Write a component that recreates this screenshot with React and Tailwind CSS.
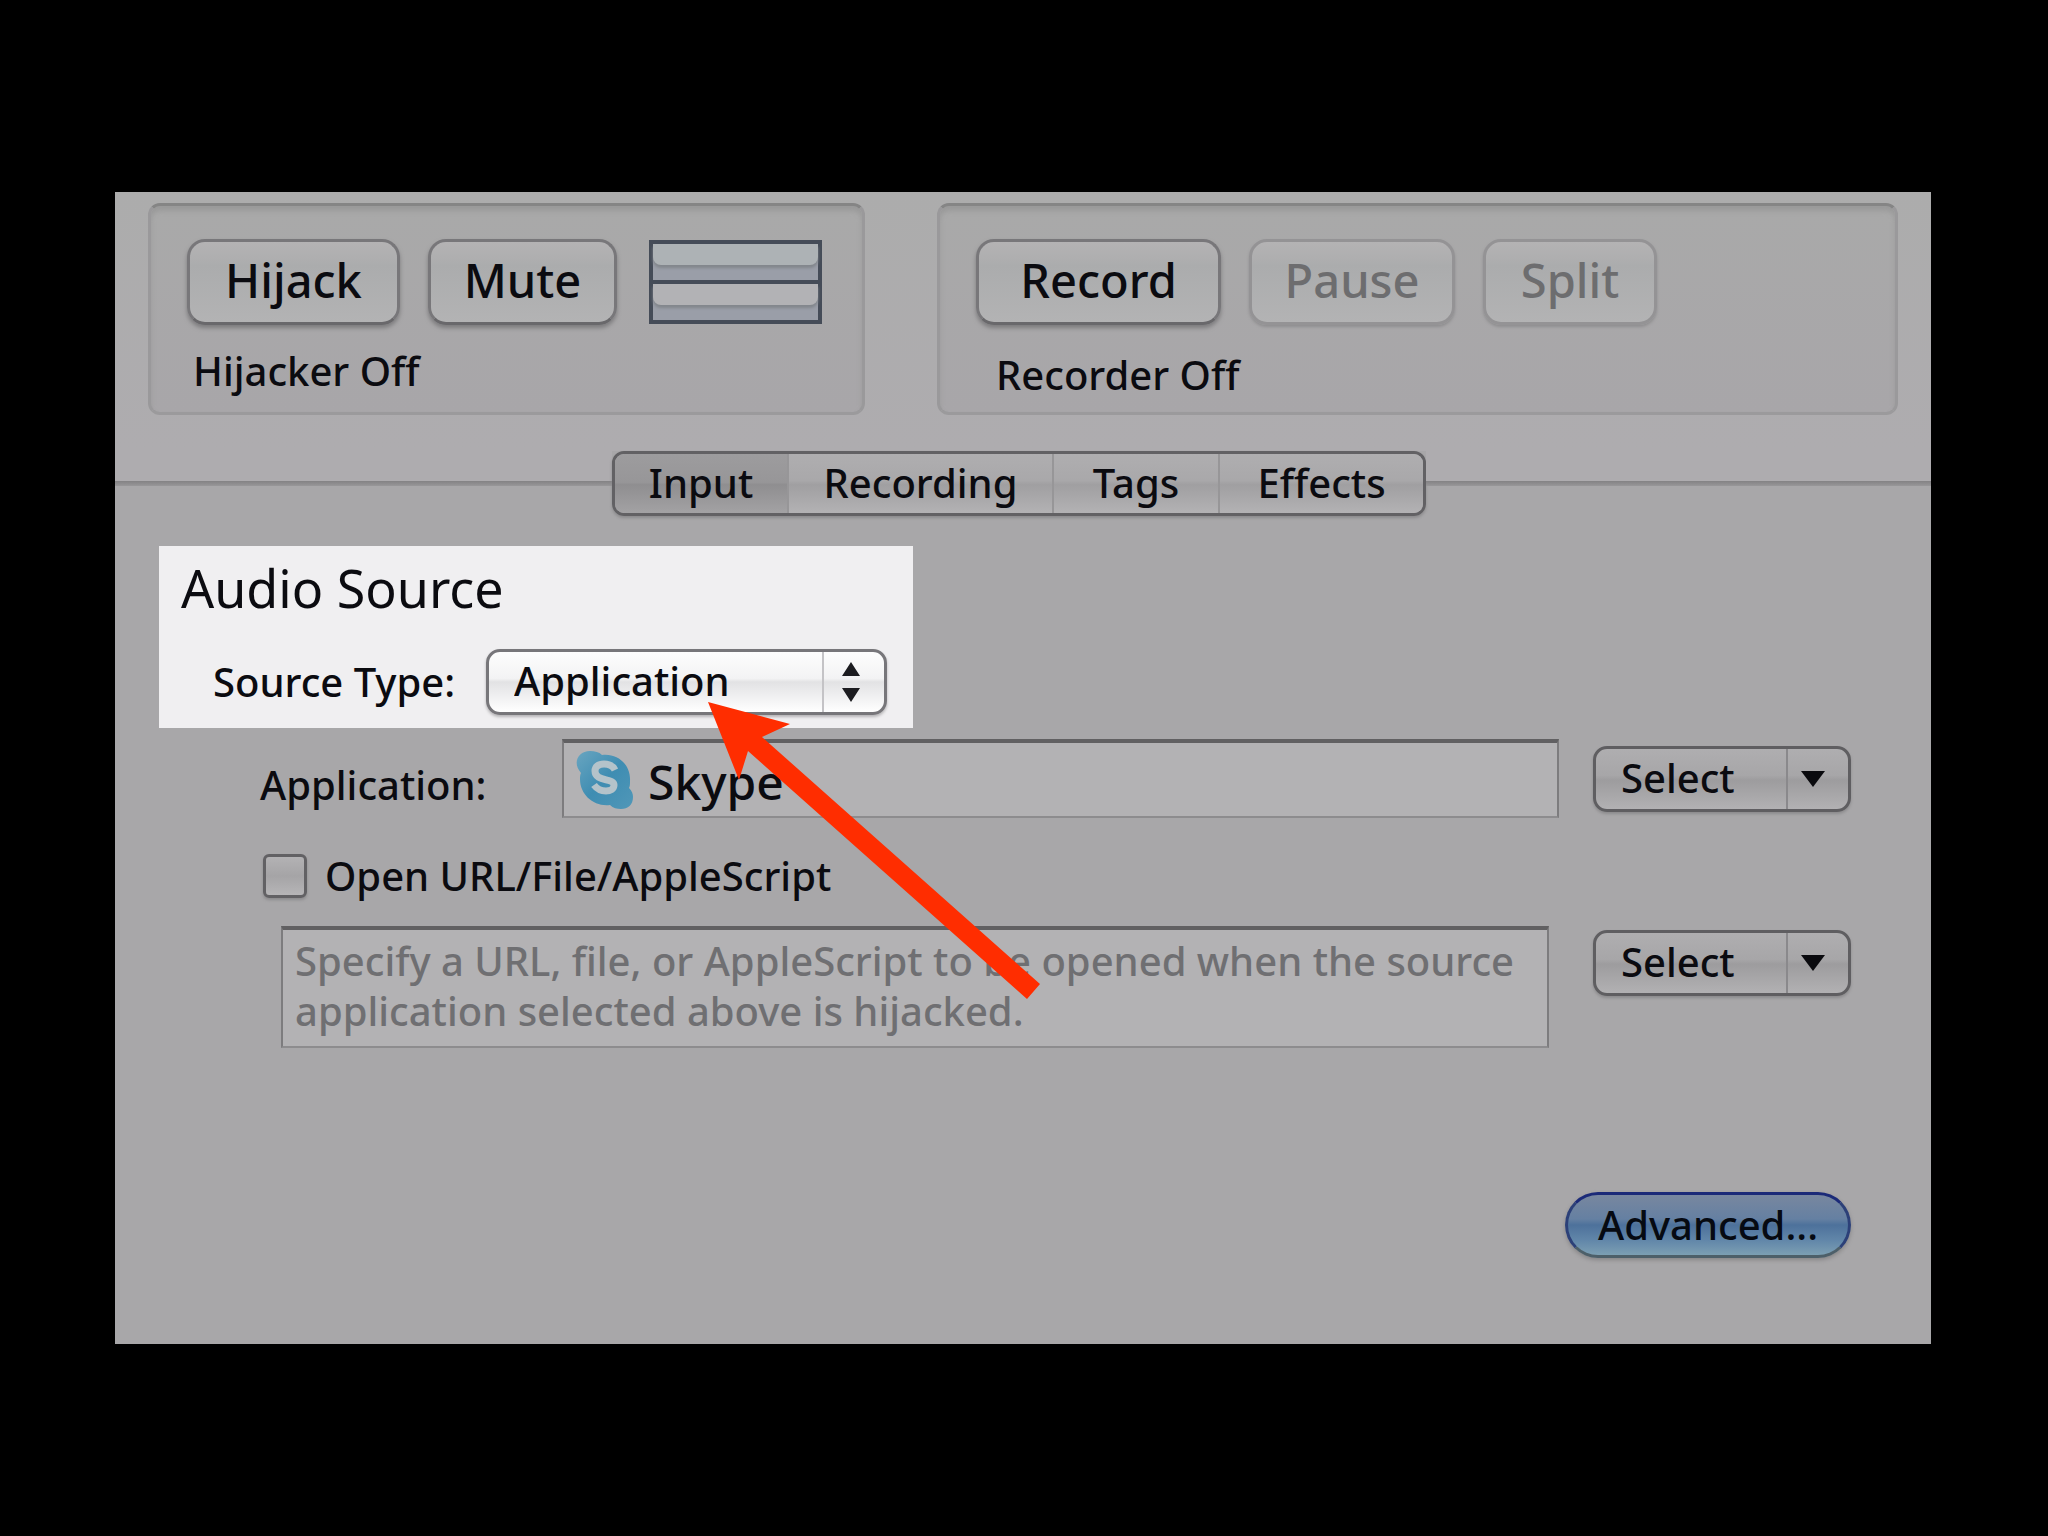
import { useState } from 'react';

const TABS = ['Input', 'Recording', 'Tags', 'Effects'];

export default function App() {
  const [tab, setTab] = useState('Input');

  return (
    <main className="relative min-h-screen bg-black pt-[192px] pb-[192px] pl-[115px] pr-[117px] font-['Noto_Sans','Lucida_Grande',sans-serif] text-[40px] font-medium leading-[48px] text-[#0b0b10]">
      <div className="bg-[#a8a7a9]">
        {/* Hijack and record groups */}
        <header className="grid grid-cols-[717fr_961fr] gap-[72px] bg-gradient-to-b from-[#acacac] to-[#aeacaf] pt-[11px] pb-9 pl-[33px] pr-[33px]">
          <Group>
            <div className="flex items-center gap-7">
              <PushButton className="w-[213px]">Hijack</PushButton>
              <PushButton className="w-[189px]">Mute</PushButton>
              <LevelMeter />
            </div>
            <p className="mt-[22px] pl-[6px]">Hijacker Off</p>
          </Group>
          <Group>
            <div className="flex items-center gap-7">
              <PushButton className="w-[245px]">Record</PushButton>
              <PushButton className="w-[206px]" disabled>Pause</PushButton>
              <PushButton className="w-[174px]" disabled>Split</PushButton>
            </div>
            <p className="mt-[26px] pl-5">Recorder Off</p>
          </Group>
        </header>

        {/* Tab bar */}
        <nav className="flex">
          <TabRule className="w-[497px]" />
          <div
            role="tablist"
            className="flex h-[65px] shrink-0 overflow-hidden rounded-[12px] border-[3px] border-[#626164] shadow-[0_2px_3px_#8c8b8d]"
          >
            {TABS.map((name) => (
              <Tab key={name} name={name} active={name === tab} onSelect={() => setTab(name)} />
            ))}
          </div>
          <TabRule className="flex-1" />
        </nav>

        {/* Audio source */}
        <section className="ml-11 mt-[30px] h-[182px] w-[754px] bg-[#f0eff1] pt-3 pl-[22px]">
          <h1 className="text-[52px] font-normal leading-[60px]">Audio Source</h1>
          <div className="mt-[31px] flex items-center pl-8">
            <label htmlFor="source-type" className="w-[273px]">Source Type:</label>
            <PopUp id="source-type" className="w-[401px]" value="Application" light />
          </div>
        </section>

        <section className="pl-[145px] pr-20 pb-[86px]">
          <div className="mt-[11px] flex items-center">
            <label htmlFor="application" className="w-[302px] pt-3">Application:</label>
            <div className="flex h-[79px] flex-1 items-center border-x-2 border-t-4 border-b-2 border-x-[#7d7c7e] border-t-[#616062] border-b-[#8d8c8e] bg-[#b3b2b4] pl-3">
              <SkypeIcon />
              <input
                id="application"
                defaultValue="Skype"
                className="ml-[14px] w-0 flex-1 bg-transparent pt-1 text-[48px] leading-[60px] outline-none"
              />
            </div>
            <PopUp id="pick-application" label="Select application" className="ml-[34px] w-[258px]" value="Select" />
          </div>

          <div className="mt-9 flex items-center gap-[18px] pl-[3px]">
            <input
              id="open-url"
              type="checkbox"
              className="size-[44px] appearance-none rounded-[6px] border-[3px] border-[#626164] bg-gradient-to-b from-[#b3b2b4] via-[#a5a4a6] to-[#b6b5b7] shadow-[0_2px_3px_#8c8b8d]"
            />
            <label htmlFor="open-url" className="-my-1">Open URL/File/AppleScript</label>
          </div>

          <div className="mt-7 flex items-start pl-[21px]">
            <textarea
              aria-label="URL, file, or AppleScript"
              disabled
              defaultValue="Specify a URL, file, or AppleScript to be opened when the source application selected above is hijacked."
              className="h-[122px] w-0 flex-1 resize-none overflow-hidden border-x-2 border-t-4 border-b-2 border-x-[#7d7c7e] border-t-[#616062] border-b-[#8d8c8e] bg-[#b3b2b4] px-3 pt-[6px] leading-[50px] text-[#6f6f72]"
            />
            <PopUp id="pick-file" label="Select file" className="ml-[44px] mt-1 w-[258px]" value="Select" />
          </div>

          <div className="mt-[144px] flex justify-end">
            <button className="h-[66px] w-[286px] rounded-full border-[3px] border-x-[#2c4078] border-t-[#1b2a78] border-b-[#4d5f69] bg-[linear-gradient(#78879f_0%,#6580a2_40%,#4d719b_50%,#6186a9_75%,#7c9fb3_100%)] text-[#060a12] shadow-[0_2px_4px_#868587]">
              Advanced...
            </button>
          </div>
        </section>
      </div>
      <PointerArrow />
    </main>
  );
}

function Group({ children }) {
  return (
    <div className="h-[212px] rounded-[12px] border-[3px] border-x-[#9a999b] border-t-[#858585] border-b-[#9b9a9c] bg-gradient-to-b from-[#a9a9a9] to-[#a8a6a9] pt-[33px] pl-9 shadow-[inset_0_5px_5px_#9a9a9a]">
      {children}
    </div>
  );
}

function PushButton({ className, disabled, children }) {
  return (
    <button
      disabled={disabled}
      className={`h-[86px] shrink-0 rounded-[18px] border-[3px] bg-[linear-gradient(#b4b3b4_0%,#aeaeaf_22%,#abacad_30%,#b3b3b4_100%)] pb-1 text-[47px] leading-[60px] ${
        disabled
          ? 'border-[#949395] text-[#6d6d6f] shadow-[0_2px_3px_#8f8e90]'
          : 'border-[#78777a] border-b-[#69686b] shadow-[0_3px_4px_#7c7b7d]'
      } ${className}`}
    >
      {children}
    </button>
  );
}

function LevelMeter() {
  return (
    <div className="ml-1 flex h-[84px] w-[173px] flex-col border-4 border-[#454c58] bg-[#9a9ea8]">
      <div className="flex-1 border-b-4 border-[#454c58]">
        <div className="h-[21px] rounded-b-[8px] bg-[#adb2b5] shadow-[0_3px_3px_#82868c]" />
      </div>
      <div className="flex-1">
        <div className="h-[21px] rounded-b-[8px] bg-[#b2b2b5] shadow-[0_3px_3px_#82868c]" />
      </div>
    </div>
  );
}

function TabRule({ className }) {
  return (
    <div className={`flex flex-col ${className}`}>
      <div className="h-[30px] bg-[#aeacaf]" />
      <div className="h-[5px] bg-gradient-to-b from-[#838284] to-[#989799]" />
    </div>
  );
}

function Tab({ name, active, onSelect }) {
  const widths = { Input: 'w-[174px]', Recording: 'w-[265px]', Tags: 'w-[166px]', Effects: 'w-[203px]' };
  return (
    <button
      role="tab"
      aria-selected={active}
      onClick={onSelect}
      className={`border-r-2 border-[#979698] pb-[2px] last:border-r-0 ${widths[name]} ${
        active
          ? 'bg-[linear-gradient(#9d9c9e_0%,#979698_48%,#8f8e90_52%,#a3a2a4_100%)]'
          : 'bg-[linear-gradient(#afaeb0_0%,#a9a8aa_45%,#a09fa1_52%,#b3b2b4_100%)]'
      }`}
    >
      {name}
    </button>
  );
}

function PopUp({ id, label, className, value, light }) {
  return (
    <div className={`relative shrink-0 ${className}`}>
      <select
        id={id}
        aria-label={label}
        className={`block h-[66px] w-full appearance-none rounded-[14px] border-[3px] pb-[2px] pl-[25px] ${
          light
            ? 'border-[#77767a] bg-[linear-gradient(#fdfdfd_0%,#f3f3f4_44%,#e2e2e4_50%,#ffffff_100%)] shadow-[0_2px_3px_#b5b4b6]'
            : 'border-[#5f5e61] bg-[linear-gradient(#afaeb0_0%,#a7a6a8_44%,#9d9c9e_52%,#b2b1b3_100%)] shadow-[0_2px_3px_#8c8b8d]'
        }`}
      >
        <option>{value}</option>
      </select>
      <span
        className={`pointer-events-none absolute inset-y-[3px] right-[3px] flex w-[62px] items-center justify-center border-l-2 ${
          light ? 'border-[#c4c3c6] pr-[6px]' : 'border-[#8a898c] pr-[10px]'
        }`}
      >
        {light ? (
          <svg width="18" height="40" viewBox="0 0 18 40" fill="#1c1c20">
            <path d="M9 0l9 14H0zM0 26h18L9 40z" />
          </svg>
        ) : (
          <svg width="24" height="16" viewBox="0 0 24 16" fill="#0a0a0e">
            <path d="M0 0h24L12 16z" />
          </svg>
        )}
      </span>
    </div>
  );
}

function SkypeIcon() {
  return (
    <svg width="58" height="58" viewBox="0 0 58 58" className="shrink-0" aria-hidden="true">
      <defs>
        <linearGradient id="skype" x1="0" y1="0" x2="1" y2="1">
          <stop offset="0" stopColor="#69a5c0" />
          <stop offset="0.5" stopColor="#3f8db2" />
          <stop offset="1" stopColor="#5097b8" />
        </linearGradient>
      </defs>
      <path
        d="M14 0c5 0 9 1 12 4 16-2 29 10 28 26 0 3 0 5-1 7 3 3 4 6 4 9 0 8-5 12-12 12-4 0-8-1-11-4C18 56 4 44 4 28c0-2 0-4 1-6C-4 12 2 0 14 0z"
        fill="url(#skype)"
      />
      <path
        d="M39 19c-2-4-6-6-11-6-6 0-9 3-9 7 0 11 19 7 19 14 0 4-4 6-8 6-5 0-9-2-12-6"
        fill="none"
        stroke="#b4c3ca"
        strokeWidth="7"
      />
    </svg>
  );
}

// callout arrow laid over the form
function PointerArrow() {
  return (
    <svg
      className="pointer-events-none absolute left-[708px] top-[702px]"
      width="334"
      height="298"
      viewBox="0 0 334 298"
      fill="#ff2d00"
      aria-hidden="true"
    >
      <path d="M0 0l82 22-28 13 278 247-13 15L40 49l-9 29z" />
    </svg>
  );
}
